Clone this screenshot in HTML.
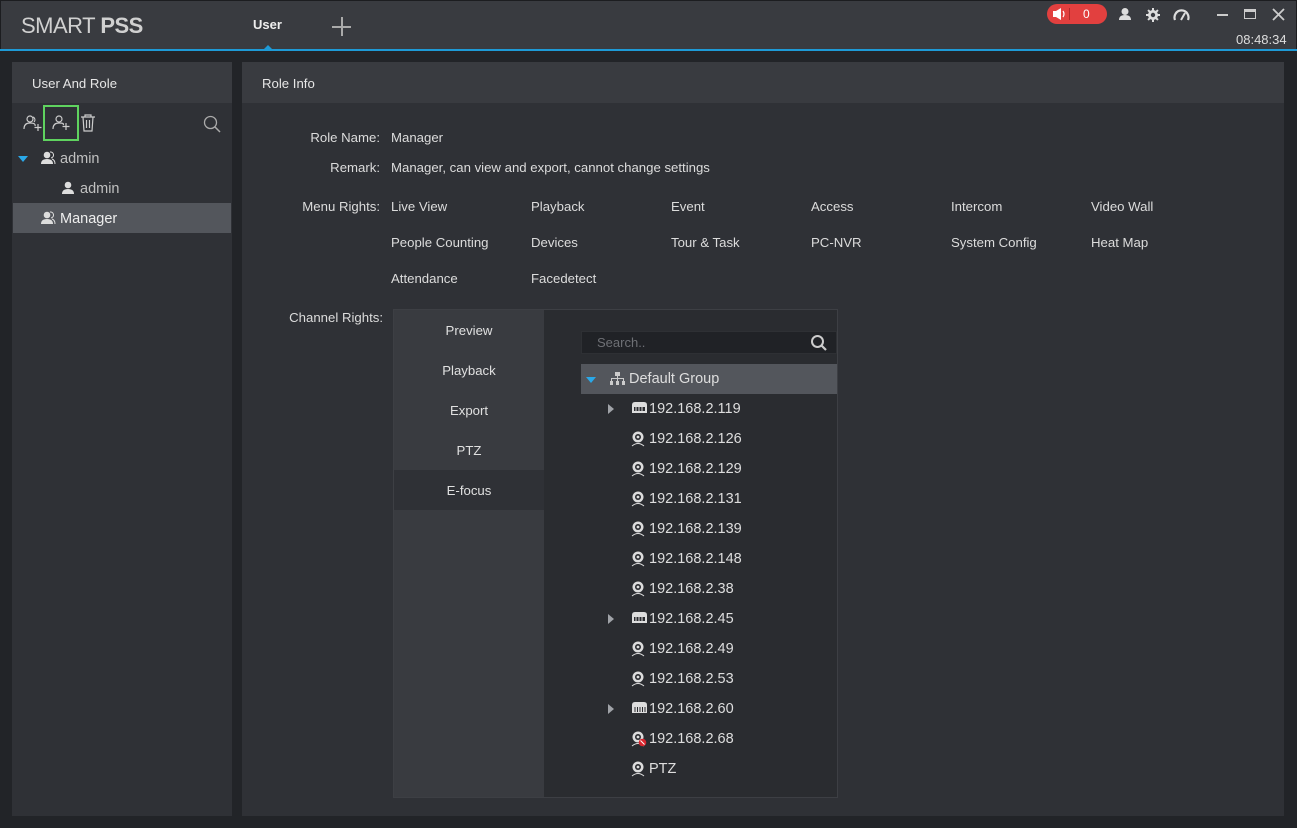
<!DOCTYPE html>
<html><head><meta charset="utf-8"><style>
*{margin:0;padding:0;box-sizing:border-box}
body{width:1297px;height:828px;background:#222428;font-family:"Liberation Sans",Arial,sans-serif;color:#d8d8d8;position:relative;overflow:hidden;font-size:13px}
.abs{position:absolute}
#top{left:0;top:0;width:1297px;height:50px;background:#393b40;border:1px solid #1c1d20;border-bottom:none}
#line{left:0;top:49px;width:1297px;height:2px;background:#1e9ad6}
.panel{background:#2f3136}
.hdr{background:#393b40;height:41px;line-height:43px;padding-left:20px;font-size:13.2px;color:#e6e6e6}
.lbl{text-align:right;width:140px;left:240px;font-size:13.2px;color:#dcdcdc}
.val{font-size:13.2px;color:#dcdcdc}
.tab{left:394px;width:150px;height:40px;line-height:42px;text-align:center;font-size:13.2px;color:#e0e0e0}
.row{left:581px;width:256px;height:30px;line-height:31px;font-size:14.5px;color:#dedede}
.row span{position:absolute;left:68px}
.cam{position:absolute;left:50px;top:7px}
.tri{position:absolute;left:27px;top:10px;width:0;height:0;border-left:6px solid #a0a3a8;border-top:5px solid transparent;border-bottom:5px solid transparent}
</style></head><body>
<div id="top" class="abs"></div>
<div id="line" class="abs"></div>
<div class="abs" style="left:21px;top:13px;font-size:22px;color:#d0d0d0;letter-spacing:-0.5px">SMART <b>PSS</b></div>
<div class="abs" style="left:253px;top:17px;font-size:13px;font-weight:bold;color:#eee">User</div>
<div class="abs" style="left:264px;top:45px;width:0;height:0;border-left:4px solid transparent;border-right:4px solid transparent;border-bottom:4px solid #1e9ad6"></div>
<div class="abs" style="left:332px;top:26px;width:19px;height:1.5px;background:#aaa"></div>
<div class="abs" style="left:341px;top:17px;width:1.5px;height:19px;background:#aaa"></div>
<div class="abs" style="left:1047px;top:4px;width:60px;height:20px;border-radius:10px;background:#e2403f"></div>
<svg class="abs" style="left:1052px;top:7px" width="16" height="14"><path d="M1 4h3l5-3v12l-5-3H1z" fill="#fff"/><path d="M11 4q2 3 0 6" stroke="#fff" fill="none" stroke-width="1.2"/></svg>
<div class="abs" style="left:1069px;top:8px;width:1px;height:12px;background:#b02a2a"></div>
<div class="abs" style="left:1083px;top:7px;font-size:12px;color:#fff">0</div>
<svg class="abs" style="left:1117px;top:7px" width="16" height="14"><circle cx="8" cy="4.5" r="3.5" fill="#ddd"/><path d="M2 13q0-5 6-5t6 5z" fill="#ddd"/></svg>
<svg class="abs" style="left:1145px;top:7px" width="16" height="16" viewBox="0 0 16 16"><g fill="#ddd"><circle cx="8" cy="8" r="5"/><rect x="7" y="1" width="2" height="14"/><rect x="1" y="7" width="14" height="2"/><rect x="7" y="1" width="2" height="14" transform="rotate(45 8 8)"/><rect x="7" y="1" width="2" height="14" transform="rotate(-45 8 8)"/></g><circle cx="8" cy="8" r="2.2" fill="#393b40"/></svg>
<svg class="abs" style="left:1173px;top:8px" width="17" height="13"><path d="M2 12A7 7 0 1 1 15 12" stroke="#ddd" stroke-width="2.2" fill="none"/><path d="M8 12l4-7" stroke="#ddd" stroke-width="2"/></svg>
<div class="abs" style="left:1217px;top:14px;width:11px;height:2px;background:#ccc"></div>
<div class="abs" style="left:1244px;top:9px;width:12px;height:10px;border:1.5px solid #ccc;border-top-width:3px"></div>
<svg class="abs" style="left:1272px;top:8px" width="13" height="13"><path d="M1 1L12 12M12 1L1 12" stroke="#ccc" stroke-width="1.8"/></svg>
<div class="abs" style="left:1236px;top:32px;font-size:13px;color:#ddd">08:48:34</div>

<div class="abs panel" style="left:12px;top:62px;width:220px;height:754px"></div>
<div class="abs hdr" style="left:12px;top:62px;width:220px">User And Role</div>
<svg class="abs" style="left:23px;top:114px" width="20" height="18"><circle cx="7" cy="5" r="3" stroke="#ccc" fill="none" stroke-width="1.2"/><path d="M1 15q0-6 6-6t5 3" stroke="#ccc" fill="none" stroke-width="1.2"/><path d="M10 3a3 3 0 0 1 1 5" stroke="#ccc" fill="none"/><path d="M15 10v7M11.5 13.5h7" stroke="#ccc" stroke-width="1.2"/></svg>
<div class="abs" style="left:43px;top:105px;width:36px;height:36px;border:2px solid #5fd35f"></div>
<svg class="abs" style="left:52px;top:114px" width="20" height="18"><circle cx="7" cy="5" r="3" stroke="#ccc" fill="none" stroke-width="1.2"/><path d="M1 15q0-6 6-6t4 2" stroke="#ccc" fill="none" stroke-width="1.2"/><path d="M14 9v7M10.5 12.5h7" stroke="#ccc" stroke-width="1.2"/></svg>
<svg class="abs" style="left:80px;top:114px" width="16" height="18"><path d="M1 3h14M5 3V1h6v2M3 3l1 14h8l1-14M6.5 6v8M9.5 6v8" stroke="#ccc" fill="none" stroke-width="1.2"/></svg>
<svg class="abs" style="left:203px;top:115px" width="18" height="18"><circle cx="7.5" cy="7.5" r="6" stroke="#aaa" fill="none" stroke-width="1.3"/><path d="M12 12l5 5" stroke="#aaa" stroke-width="1.5"/></svg>
<div class="abs" style="left:18px;top:156px;width:0;height:0;border-top:6px solid #2aa8e8;border-left:5px solid transparent;border-right:5px solid transparent"></div>
<svg class="abs" style="left:40px;top:151px" width="16" height="14"><circle cx="7" cy="4" r="3.3" fill="#ddd"/><path d="M1 13q0-5 6-5t6 5z" fill="#ddd"/><path d="M10 1a3 3 0 0 1 1 6M12 8q3 1 3 5" stroke="#ddd" fill="none"/></svg>
<div class="abs" style="left:60px;top:151px;font-size:14.5px;color:#c0c0c0">admin</div>
<svg class="abs" style="left:61px;top:181px" width="14" height="14"><circle cx="7" cy="4" r="3.3" fill="#ddd"/><path d="M1 13q0-5 6-5t6 5z" fill="#ddd"/></svg>
<div class="abs" style="left:80px;top:181px;font-size:14.5px;color:#c0c0c0">admin</div>
<div class="abs" style="left:13px;top:203px;width:218px;height:30px;background:#53565c"></div>
<svg class="abs" style="left:40px;top:211px" width="16" height="14"><circle cx="7" cy="4" r="3.3" fill="#ddd"/><path d="M1 13q0-5 6-5t6 5z" fill="#ddd"/><path d="M10 1a3 3 0 0 1 1 6M12 8q3 1 3 5" stroke="#ddd" fill="none"/></svg>
<div class="abs" style="left:60px;top:211px;font-size:14.5px;color:#eee">Manager</div>

<div class="abs panel" style="left:242px;top:62px;width:1042px;height:754px"></div>
<div class="abs hdr" style="left:242px;top:62px;width:1042px">Role Info</div>
<div class="abs lbl" style="top:130px">Role Name:</div><div class="abs val" style="left:391px;top:130px">Manager</div>
<div class="abs lbl" style="top:160px">Remark:</div><div class="abs val" style="left:391px;top:160px">Manager, can view and export, cannot change settings</div>
<div class="abs lbl" style="top:199px">Menu Rights:</div>
<div class="abs val" style="left:391px;top:199px">Live View</div>
<div class="abs val" style="left:531px;top:199px">Playback</div>
<div class="abs val" style="left:671px;top:199px">Event</div>
<div class="abs val" style="left:811px;top:199px">Access</div>
<div class="abs val" style="left:951px;top:199px">Intercom</div>
<div class="abs val" style="left:1091px;top:199px">Video Wall</div>
<div class="abs val" style="left:391px;top:235px">People Counting</div>
<div class="abs val" style="left:531px;top:235px">Devices</div>
<div class="abs val" style="left:671px;top:235px">Tour &amp; Task</div>
<div class="abs val" style="left:811px;top:235px">PC-NVR</div>
<div class="abs val" style="left:951px;top:235px">System Config</div>
<div class="abs val" style="left:1091px;top:235px">Heat Map</div>
<div class="abs val" style="left:391px;top:271px">Attendance</div>
<div class="abs val" style="left:531px;top:271px">Facedetect</div>
<div class="abs lbl" style="top:310px;left:243px">Channel Rights:</div>

<div class="abs" style="left:393px;top:309px;width:445px;height:489px;background:#2a2c30;border:1px solid #3d3f44"></div>
<div class="abs" style="left:394px;top:310px;width:150px;height:487px;background:#393b40"></div>
<div class="abs tab" style="top:310px">Preview</div>
<div class="abs tab" style="top:350px">Playback</div>
<div class="abs tab" style="top:390px">Export</div>
<div class="abs tab" style="top:430px">PTZ</div>
<div class="abs tab" style="top:470px;background:#2f3136">E-focus</div>

<div class="abs" style="left:581px;top:331px;width:256px;height:23px;background:#202226;border:1px solid #2e3034"></div>
<div class="abs" style="left:597px;top:335px;font-size:13px;color:#6e7075">Search..</div>
<svg class="abs" style="left:810px;top:334px" width="18" height="18"><circle cx="7.5" cy="7.5" r="5.5" stroke="#ccc" fill="none" stroke-width="2"/><path d="M11.5 11.5l4.5 4.5" stroke="#ccc" stroke-width="2.2"/></svg>

<div class="abs row" style="top:364px;background:#53565c">
<div style="position:absolute;left:5px;top:13px;border-top:6px solid #2aa8e8;border-left:5px solid transparent;border-right:5px solid transparent;width:0;height:0"></div>
<svg style="position:absolute;left:29px;top:8px" width="15" height="14"><g fill="#ccc"><rect x="5" y="0" width="5" height="4"/><rect x="7" y="4" width="1" height="3"/><rect x="1" y="6" width="13" height="1"/><rect x="1" y="6" width="1" height="3"/><rect x="7" y="6" width="1" height="3"/><rect x="13" y="6" width="1" height="3"/><rect x="0" y="9" width="3" height="4"/><rect x="6" y="9" width="3" height="4"/><rect x="12" y="9" width="3" height="4"/></g></svg>
<span style="left:48px">Default Group</span></div>

<div class="abs row" style="top:394px"><i class="tri"></i><svg class="cam" width="17" height="14"><path d="M1 4q0-3 3-3h9q3 0 3 3v8H1z" fill="#ddd"/><rect x="3" y="6" width="11" height="4" fill="#2a2c30"/><path d="M5 6v4M8 6v4M11 6v4" stroke="#ddd"/></svg><span>192.168.2.119</span></div>
<div class="abs row" style="top:424px"><svg class="cam" width="16" height="16"><circle cx="7" cy="6" r="5.5" fill="#ddd"/><circle cx="7" cy="6" r="3" fill="#2a2c30"/><circle cx="7" cy="6" r="1.4" fill="#ddd"/><path d="M1 15q6-5 12 0" stroke="#ddd" fill="none"/></svg><span>192.168.2.126</span></div>
<div class="abs row" style="top:454px"><svg class="cam" width="16" height="16"><circle cx="7" cy="6" r="5.5" fill="#ddd"/><circle cx="7" cy="6" r="3" fill="#2a2c30"/><circle cx="7" cy="6" r="1.4" fill="#ddd"/><path d="M1 15q6-5 12 0" stroke="#ddd" fill="none"/></svg><span>192.168.2.129</span></div>
<div class="abs row" style="top:484px"><svg class="cam" width="16" height="16"><circle cx="7" cy="6" r="5.5" fill="#ddd"/><circle cx="7" cy="6" r="3" fill="#2a2c30"/><circle cx="7" cy="6" r="1.4" fill="#ddd"/><path d="M1 15q6-5 12 0" stroke="#ddd" fill="none"/></svg><span>192.168.2.131</span></div>
<div class="abs row" style="top:514px"><svg class="cam" width="16" height="16"><circle cx="7" cy="6" r="5.5" fill="#ddd"/><circle cx="7" cy="6" r="3" fill="#2a2c30"/><circle cx="7" cy="6" r="1.4" fill="#ddd"/><path d="M1 15q6-5 12 0" stroke="#ddd" fill="none"/></svg><span>192.168.2.139</span></div>
<div class="abs row" style="top:544px"><svg class="cam" width="16" height="16"><circle cx="7" cy="6" r="5.5" fill="#ddd"/><circle cx="7" cy="6" r="3" fill="#2a2c30"/><circle cx="7" cy="6" r="1.4" fill="#ddd"/><path d="M1 15q6-5 12 0" stroke="#ddd" fill="none"/></svg><span>192.168.2.148</span></div>
<div class="abs row" style="top:574px"><svg class="cam" width="16" height="16"><circle cx="7" cy="6" r="5.5" fill="#ddd"/><circle cx="7" cy="6" r="3" fill="#2a2c30"/><circle cx="7" cy="6" r="1.4" fill="#ddd"/><path d="M1 15q6-5 12 0" stroke="#ddd" fill="none"/></svg><span>192.168.2.38</span></div>
<div class="abs row" style="top:604px"><i class="tri"></i><svg class="cam" width="17" height="14"><path d="M1 4q0-3 3-3h9q3 0 3 3v8H1z" fill="#ddd"/><rect x="3" y="6" width="11" height="4" fill="#2a2c30"/><path d="M5 6v4M8 6v4M11 6v4" stroke="#ddd"/></svg><span>192.168.2.45</span></div>
<div class="abs row" style="top:634px"><svg class="cam" width="16" height="16"><circle cx="7" cy="6" r="5.5" fill="#ddd"/><circle cx="7" cy="6" r="3" fill="#2a2c30"/><circle cx="7" cy="6" r="1.4" fill="#ddd"/><path d="M1 15q6-5 12 0" stroke="#ddd" fill="none"/></svg><span>192.168.2.49</span></div>
<div class="abs row" style="top:664px"><svg class="cam" width="16" height="16"><circle cx="7" cy="6" r="5.5" fill="#ddd"/><circle cx="7" cy="6" r="3" fill="#2a2c30"/><circle cx="7" cy="6" r="1.4" fill="#ddd"/><path d="M1 15q6-5 12 0" stroke="#ddd" fill="none"/></svg><span>192.168.2.53</span></div>
<div class="abs row" style="top:694px"><i class="tri"></i><svg class="cam" width="17" height="14"><path d="M1 4q0-3 3-3h9q3 0 3 3v8H1z" fill="#ddd"/><path d="M4 6v5M6.5 6v5M9 6v5M11.5 6v5M14 6v5" stroke="#2a2c30" stroke-width="1"/></svg><span>192.168.2.60</span></div>
<div class="abs row" style="top:724px"><svg class="cam" width="16" height="16"><circle cx="7" cy="6" r="5.5" fill="#ddd"/><circle cx="7" cy="6" r="3" fill="#2a2c30"/><circle cx="7" cy="6" r="1.4" fill="#ddd"/><path d="M1 15q6-5 12 0" stroke="#ddd" fill="none"/><circle cx="11.5" cy="11.5" r="3.8" fill="#d9262f"/><path d="M9.5 9.5l4 4" stroke="#fff"/></svg><span>192.168.2.68</span></div>
<div class="abs row" style="top:754px"><svg class="cam" width="16" height="16"><circle cx="7" cy="6" r="5.5" fill="#ddd"/><circle cx="7" cy="6" r="3" fill="#2a2c30"/><circle cx="7" cy="6" r="1.4" fill="#ddd"/><path d="M1 15q6-5 12 0" stroke="#ddd" fill="none"/></svg><span>PTZ</span></div>
</body></html>
